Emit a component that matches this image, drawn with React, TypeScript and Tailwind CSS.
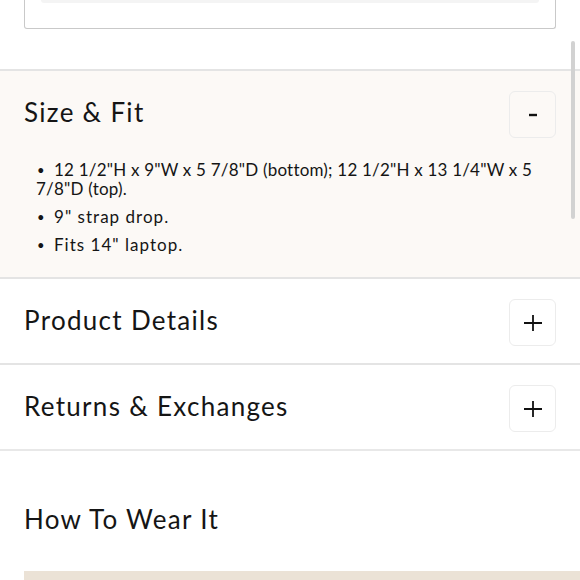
import React from "react";

function PlusIcon() {
  return (
    <svg width="20" height="20" viewBox="0 0 20 20" fill="none">
      <path d="M10 2v16M1 10h18" stroke="#111" strokeWidth="1.8" />
    </svg>
  );
}

function MinusIcon() {
  return (
    <svg width="10" height="4" viewBox="0 0 10 4" fill="none">
      <path d="M1 2h8" stroke="#111" strokeWidth="2.4" />
    </svg>
  );
}

function Header({ title, open }: { title: string; open?: boolean }) {
  return (
    <div className="flex items-center justify-between">
      <h2 className="pb-[5px] text-[26px] leading-none tracking-[0.05em] text-[#151515]">{title}</h2>
      <button className="flex h-[47px] w-[47px] items-center justify-center rounded-[6px] border border-[#ececec]">
        {open ? <MinusIcon /> : <PlusIcon />}
      </button>
    </div>
  );
}

function Bullet() {
  return <span className="inline-block w-[18px] pl-[1px] align-[1px] text-[13px] leading-none tracking-normal">•</span>;
}

export default function App() {
  return (
    <div
      className="relative h-[580px] w-[580px] overflow-hidden bg-white text-[#151515]"
      style={{ fontFamily: "Lato, 'Open Sans', sans-serif" }}
    >
      <div className="mx-6 h-[29px] rounded-b-[3px] border-x-[1.5px] border-b-[1.5px] border-[#c9c9c9] px-4">
        <div className="h-[3px] rounded-b-[3px] bg-[#f4f4f4]" />
      </div>
      <div className="h-[40px]" />
      <section className="border-t-2 border-[#e4e4e4] bg-[#fcf9f6] px-6 pb-[23px] pt-[20px]">
        <Header title="Size & Fit" open />
        <ul className="mt-[22px] space-y-[9px] pl-3 text-[17px] leading-[19px] text-[#151515]">
          <li className="tracking-[0.012em]">
            <Bullet />
            <span className="whitespace-nowrap">12 1/2"H x 9"W x 5 7/8"D (bottom); 12 1/2"H x 13 1/4"W x 5</span>
            <br />
            7/8"D (top).
          </li>
          <li className="tracking-[0.06em]">
            <Bullet />
            9" strap drop.
          </li>
          <li className="tracking-[0.06em]">
            <Bullet />
            Fits 14" laptop.
          </li>
        </ul>
      </section>
      <section className="border-t-2 border-[#e4e4e4] px-6 pb-[17px] pt-[20px]">
        <Header title="Product Details" />
      </section>
      <section className="border-t-2 border-[#e4e4e4] px-6 pb-[17px] pt-[20px]">
        <Header title="Returns & Exchanges" />
      </section>
      <div className="border-t-2 border-[#e8e8e8] px-6 pt-[54px]">
        <h2 className="text-[26px] leading-[28px] tracking-[0.05em]">How To Wear It</h2>
        <div className="mt-[38px] h-[20px] bg-[#ebe2d6]" style={{ marginRight: -24 }} />
      </div>
      <div className="absolute right-[5px] top-[41px] h-[178px] w-[4px] rounded-full bg-[#d2d2d2]" />
    </div>
  );
}
